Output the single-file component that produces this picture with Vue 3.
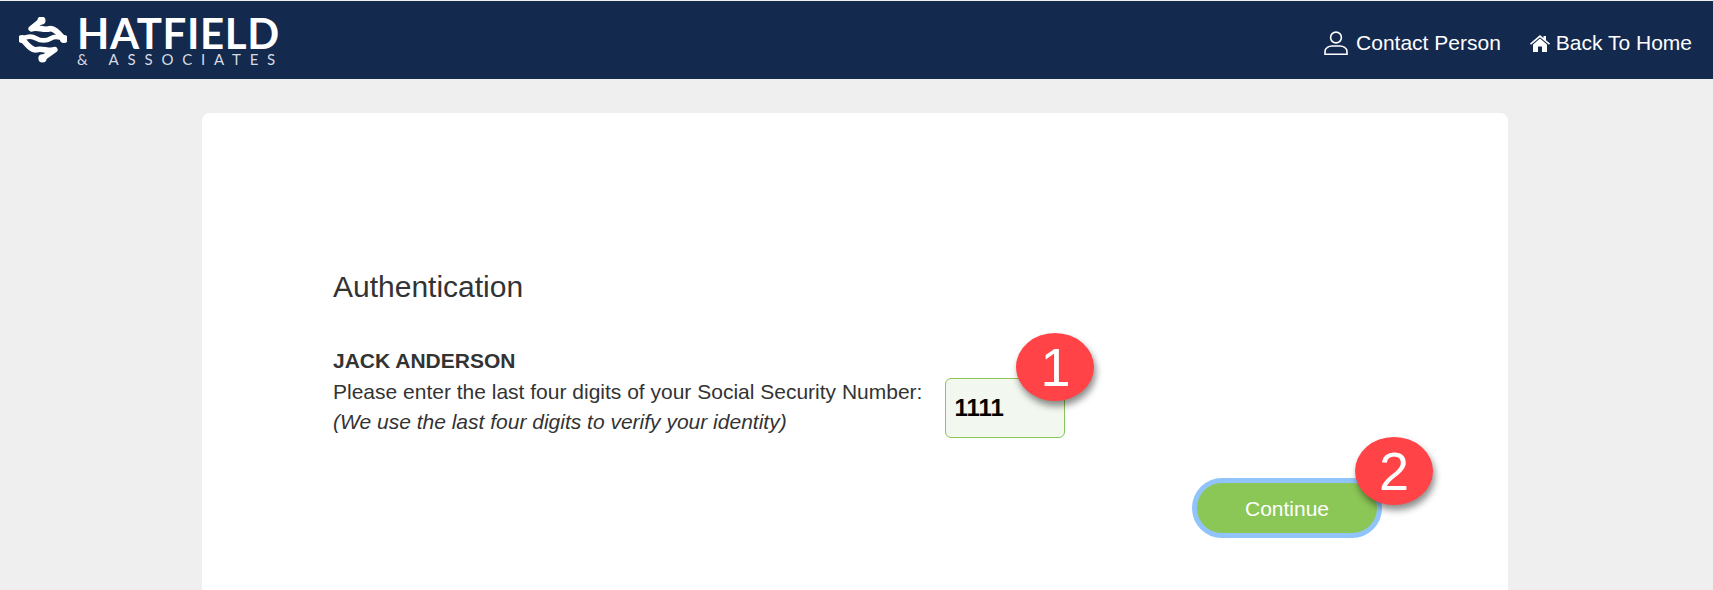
<template>
  <div class="page">
    <header class="topbar">
      <div class="brand">
        <svg class="brand-mark" viewBox="6 9 47 44" fill="none" stroke="#fff" stroke-linecap="round" stroke-linejoin="round">
          <path d="M28 12 L18 20 C24 17.5 30 22 36 20 C41 19 46 26 50 30" stroke-width="5.6" />
          <path d="M9 30 C14 27 19 27 23 29.5 C27 32 33 32 37 29.5 C41 27 45 27.5 50 30" stroke-width="4.6" />
          <path d="M29 49 L41 40.5 C35 43 29 38.5 23 40.5 C18 41.5 13 34 9 30" stroke-width="5.6" />
          <circle cx="28" cy="12" r="4" fill="#fff" stroke="none" />
          <circle cx="50" cy="30" r="4" fill="#fff" stroke="none" />
          <circle cx="9" cy="30" r="4" fill="#fff" stroke="none" />
          <circle cx="29" cy="49" r="4" fill="#fff" stroke="none" />
        </svg>
        <div class="brand-text">
          <div class="brand-name">HATFIELD</div>
          <div class="brand-sub">&amp; ASSOCIATES</div>
        </div>
      </div>
      <nav class="nav">
        <a class="nav-link">
          <svg class="icon-person" viewBox="0 0 24 24" fill="none" stroke="#fff" stroke-width="1.6">
            <circle cx="12" cy="6.5" r="5.4" />
            <path d="M1 23.2 V20.5 C1 17 5 15 8 15 H16 C19 15 23 17 23 20.5 V23.2 Z" />
          </svg>
          Contact Person
        </a>
        <a class="nav-link">
          <svg class="icon-home" viewBox="0 0 20 17" fill="#fff">
            <path d="M10 0 L13.5 3 V1 H16 V5.2 L20 8.6 L19 9.8 L10 2.2 L1 9.8 L0 8.6 Z" />
            <path d="M10 3.6 L17 9.6 V17 H12 V11.5 H8 V17 H3 V9.6 Z" />
          </svg>
          Back To Home
        </a>
      </nav>
    </header>

    <main class="content">
      <section class="card">
        <h1 class="title">Authentication</h1>
        <div class="auth-row">
          <div class="auth-copy">
            <div class="auth-name">JACK ANDERSON</div>
            <div>Please enter the last four digits of your Social Security Number:</div>
            <div class="auth-note">(We use the last four digits to verify your identity)</div>
          </div>
          <div class="ssn-wrap">
            <input class="ssn" type="text" value="1111" />
            <span class="badge badge-one">1</span>
          </div>
        </div>
        <div class="actions">
          <div class="continue-wrap">
            <button class="continue" type="button">Continue</button>
            <span class="badge badge-two">2</span>
          </div>
        </div>
      </section>
    </main>
  </div>
</template>

<script setup>
</script>

<style>
html, body {
  margin: 0;
  background: #efefef;
  overflow: hidden;
}
</style>

<style scoped>
.page {
  height: 590px;
  overflow: hidden;
  background: #efefef;
  font-family: "Liberation Sans", Arial, sans-serif;
  color: #333;
}

.topbar {
  height: 78px;
  margin-top: 1px;
  background: #13294d;
  display: flex;
  align-items: center;
  justify-content: space-between;
  padding: 0 21px 0 19px;
}

.brand {
  display: flex;
  align-items: center;
  gap: 10px;
}

.brand-mark {
  width: 48px;
  height: 46px;
}

.brand-text {
  color: #fff;
  font-family: Lato, "Liberation Sans", sans-serif;
  line-height: 1;
}

.brand-name {
  font-size: 42px;
  font-weight: 700;
  line-height: 36px;
  letter-spacing: 0.6px;
}

.brand-sub {
  font-size: 15px;
  line-height: 14px;
  letter-spacing: 8.8px;
  color: #d6dbe3;
  white-space: nowrap;
  margin-top: 1px;
}

.nav {
  display: flex;
  align-items: center;
  gap: 29px;
  padding-top: 6px;
}

.nav-link {
  display: flex;
  align-items: center;
  color: #fff;
  font-size: 21px;
}

.icon-person {
  width: 24px;
  height: 24px;
  margin-right: 8px;
}

.icon-home {
  width: 20px;
  height: 17px;
  margin-right: 6px;
}

.content {
  padding: 34px 205px 0 202px;
}

.card {
  background: #fff;
  border-radius: 8px;
  height: 477px;
  padding: 158px 126px 0 131px;
}

.title {
  margin: 0;
  font-size: 30px;
  font-weight: 400;
  line-height: 32px;
}

.auth-row {
  display: flex;
  align-items: flex-start;
  gap: 23px;
  margin-top: 43px;
}

.auth-copy {
  font-size: 21px;
  line-height: 30.5px;
}

.auth-name {
  font-weight: 700;
}

.auth-note {
  font-style: italic;
}

.ssn-wrap {
  position: relative;
  margin-top: 32px;
}

.ssn {
  display: block;
  box-sizing: border-box;
  width: 120px;
  height: 60px;
  padding: 0 8px;
  border: 1px solid #8bc756;
  border-radius: 6px;
  background: #f2f7ef;
  font-family: "Liberation Sans", Arial, sans-serif;
  font-size: 24px;
  font-weight: 700;
  color: #000;
  outline: none;
}

.actions {
  display: flex;
  justify-content: flex-end;
  margin-top: 40px;
}

.continue-wrap {
  position: relative;
}

.continue {
  display: block;
  box-sizing: border-box;
  width: 190px;
  height: 60px;
  padding: 2px 0 0;
  border: 5px solid #90c4fb;
  border-radius: 30px;
  background: #8bc756;
  color: #fff;
  font-family: "Liberation Sans", Arial, sans-serif;
  font-size: 21px;
}

.badge {
  position: absolute;
  width: 78px;
  height: 68px;
  border-radius: 50%;
  background: #ff4346;
  color: #fff;
  font-size: 54px;
  line-height: 68px;
  text-align: center;
  box-shadow: 2px 5px 7px rgba(0, 0, 0, 0.45);
}

.badge-one {
  left: 71px;
  top: -45px;
}

.badge-two {
  left: 163px;
  top: -41px;
}
</style>
